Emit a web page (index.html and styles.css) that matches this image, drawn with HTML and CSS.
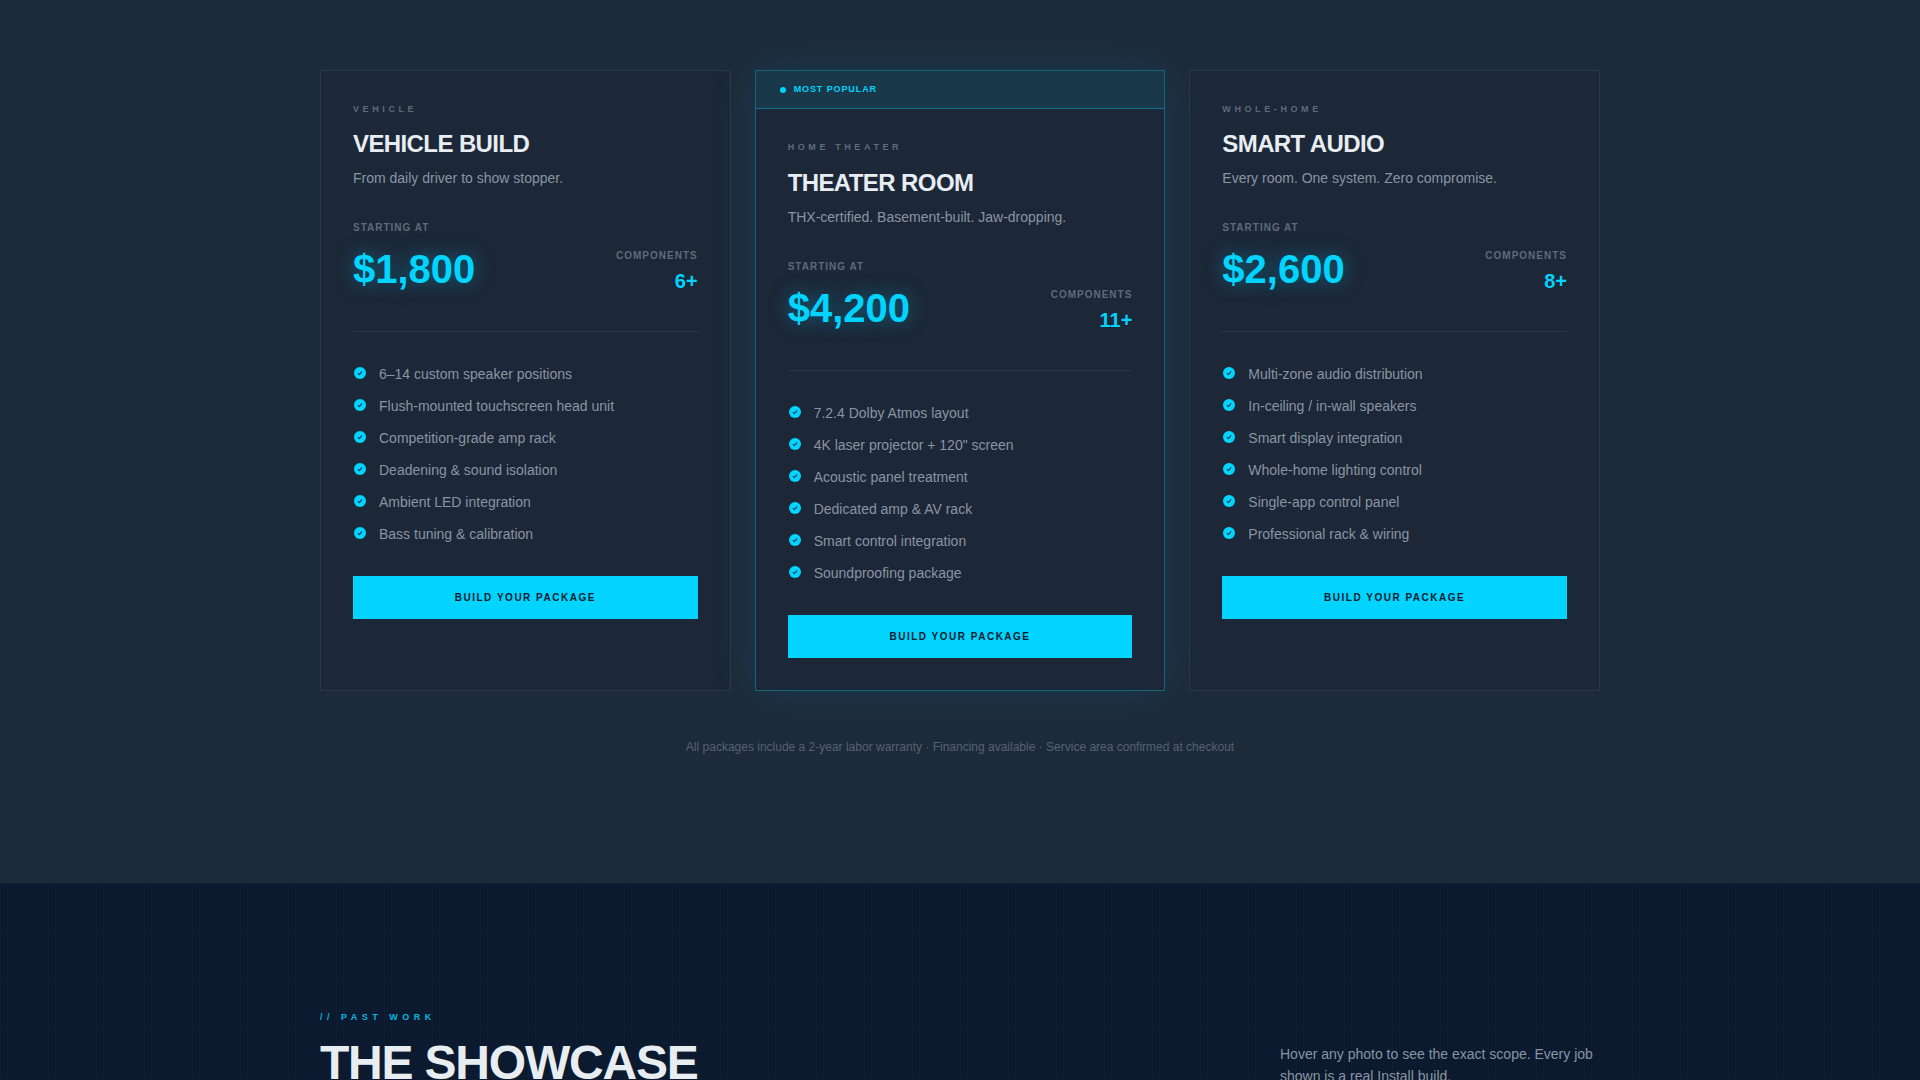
FILE: index.html
```html
<!DOCTYPE html>
<html lang="en">
<head>
  <meta charset="UTF-8" />
  <meta name="viewport" content="width=device-width, initial-scale=1.0" />
  <title>Packages</title>
  <link rel="stylesheet" href="styles.css">
</head>
<body>
  <!-- Hidden check icon, reused by every feature row -->
  <svg class="icon-sprite" aria-hidden="true">
    <symbol id="check" viewBox="0 0 14 14">
      <circle cx="7" cy="7" r="6" fill="#00d4ff"/>
      <path d="M4.8 7.2 6.3 8.6 9.2 5.4" fill="none" stroke="#0f3a55" stroke-width="1.1"/>
    </symbol>
  </svg>

  <!-- Packages -->
  <section class="packages">
    <div class="wrap">
      <div class="package-grid">
        <article class="card">
          <div class="card-body">
            <p class="card-label">VEHICLE</p>
            <h2>VEHICLE BUILD</h2>
            <p class="card-sub">From daily driver to show stopper.</p>
            <div class="price-row">
              <div>
                <p class="meta">STARTING AT</p>
                <p class="price">$1,800</p>
              </div>
              <div class="count">
                <p class="meta">COMPONENTS</p>
                <p class="count-num">6+</p>
              </div>
            </div>
            <ul class="features">
              <li><svg class="check"><use href="#check"/></svg>6–14 custom speaker positions</li>
              <li><svg class="check"><use href="#check"/></svg>Flush-mounted touchscreen head unit</li>
              <li><svg class="check"><use href="#check"/></svg>Competition-grade amp rack</li>
              <li><svg class="check"><use href="#check"/></svg>Deadening &amp; sound isolation</li>
              <li><svg class="check"><use href="#check"/></svg>Ambient LED integration</li>
              <li><svg class="check"><use href="#check"/></svg>Bass tuning &amp; calibration</li>
            </ul>
            <button class="build-btn">BUILD YOUR PACKAGE</button>
          </div>
        </article>

        <article class="card featured">
          <div class="popular"><span class="dot"></span>MOST POPULAR</div>
          <div class="card-body">
            <p class="card-label">HOME THEATER</p>
            <h2>THEATER ROOM</h2>
            <p class="card-sub">THX-certified. Basement-built. Jaw-dropping.</p>
            <div class="price-row">
              <div>
                <p class="meta">STARTING AT</p>
                <p class="price">$4,200</p>
              </div>
              <div class="count">
                <p class="meta">COMPONENTS</p>
                <p class="count-num">11+</p>
              </div>
            </div>
            <ul class="features">
              <li><svg class="check"><use href="#check"/></svg>7.2.4 Dolby Atmos layout</li>
              <li><svg class="check"><use href="#check"/></svg>4K laser projector + 120" screen</li>
              <li><svg class="check"><use href="#check"/></svg>Acoustic panel treatment</li>
              <li><svg class="check"><use href="#check"/></svg>Dedicated amp &amp; AV rack</li>
              <li><svg class="check"><use href="#check"/></svg>Smart control integration</li>
              <li><svg class="check"><use href="#check"/></svg>Soundproofing package</li>
            </ul>
            <button class="build-btn">BUILD YOUR PACKAGE</button>
          </div>
        </article>

        <article class="card">
          <div class="card-body">
            <p class="card-label">WHOLE-HOME</p>
            <h2>SMART AUDIO</h2>
            <p class="card-sub">Every room. One system. Zero compromise.</p>
            <div class="price-row">
              <div>
                <p class="meta">STARTING AT</p>
                <p class="price">$2,600</p>
              </div>
              <div class="count">
                <p class="meta">COMPONENTS</p>
                <p class="count-num">8+</p>
              </div>
            </div>
            <ul class="features">
              <li><svg class="check"><use href="#check"/></svg>Multi-zone audio distribution</li>
              <li><svg class="check"><use href="#check"/></svg>In-ceiling / in-wall speakers</li>
              <li><svg class="check"><use href="#check"/></svg>Smart display integration</li>
              <li><svg class="check"><use href="#check"/></svg>Whole-home lighting control</li>
              <li><svg class="check"><use href="#check"/></svg>Single-app control panel</li>
              <li><svg class="check"><use href="#check"/></svg>Professional rack &amp; wiring</li>
            </ul>
            <button class="build-btn">BUILD YOUR PACKAGE</button>
          </div>
        </article>
      </div>
      <p class="fine-print">All packages include a 2-year labor warranty · Financing available · Service area confirmed at checkout</p>
    </div>
  </section>

  <!-- Showcase -->
  <section class="showcase">
    <div class="wrap showcase-head">
      <div>
        <p class="eyebrow">// PAST WORK</p>
        <h2 class="showcase-title">THE SHOWCASE</h2>
      </div>
      <p class="showcase-note">Hover any photo to see the exact scope. Every job shown is a real Install build.</p>
    </div>
  </section>
</body>
</html>
```

FILE: styles.css
```css
:root {
  --cyan: #00d4ff;
  --section-bg: #1d2a3a;
  --card-bg: #1c2737;
  --dark-bg: #0b1a2e;
  --text: #e8edf2;
  --muted: #8a95a3;
  --dim: #5f6b7a;
  --line: #2a3748;
}

* {
  box-sizing: border-box;
}

html, body {
  height: 100%;
  overflow: hidden;
}

body {
  margin: 0;
  font-family: "Liberation Sans", Arial, sans-serif;
  background: var(--dark-bg);
}

p, h2, ul {
  margin: 0;
  padding: 0;
}

.icon-sprite {
  display: none;
}

.wrap {
  width: 1280px;
  margin: 0 auto;
}

/* Packages */
.packages {
  height: 883px;
  padding-top: 70px;
  background: var(--section-bg);
}

.package-grid {
  display: grid;
  grid-template-columns: repeat(3, 1fr);
  gap: 24px;
}

.card {
  display: flex;
  flex-direction: column;
  background: var(--card-bg);
  border: 1px solid var(--line);
}

.card-body {
  padding: 32px;
}

.featured {
  border-color: rgba(0, 212, 255, 0.35);
  box-shadow: 0 0 48px rgba(0, 212, 255, 0.1);
}

.popular {
  display: flex;
  align-items: center;
  gap: 8px;
  height: 38.4px;
  padding: 0 24px 1px;
  background: rgba(0, 212, 255, 0.1);
  border-bottom: 1px solid rgba(0, 212, 255, 0.35);
  color: var(--cyan);
  font-size: 9px;
  font-weight: 700;
  letter-spacing: 0.9px;
}

.dot {
  width: 6px;
  height: 6px;
  margin-top: 2px;
  border-radius: 50%;
  background: var(--cyan);
}

.card-label {
  font-size: 9px;
  font-weight: 700;
  line-height: 12px;
  letter-spacing: 3.6px;
  color: var(--dim);
}

.card h2 {
  margin-top: 13.3px;
  font-size: 24px;
  line-height: 32px;
  letter-spacing: -0.6px;
  color: var(--text);
}

.card-sub {
  margin-top: 8px;
  font-size: 14px;
  line-height: 20px;
  color: var(--muted);
}

.price-row {
  display: flex;
  justify-content: space-between;
  align-items: flex-end;
  margin-top: 34px;
  padding-bottom: 37px;
  border-bottom: 1px solid var(--line);
}

.meta {
  font-size: 10px;
  font-weight: 700;
  line-height: 12px;
  letter-spacing: 1px;
  color: var(--dim);
}

.price {
  margin: 12px 0 2px;
  font-size: 40px;
  font-weight: 700;
  line-height: 46px;
  color: var(--cyan);
  text-shadow: 0 0 20px rgba(0, 212, 255, 0.4);
}

.count {
  text-align: right;
}

.count-num {
  margin-top: 6px;
  font-size: 20px;
  font-weight: 700;
  line-height: 26px;
  color: var(--cyan);
}

.features {
  display: flex;
  flex-direction: column;
  gap: 12px;
  margin-top: 32px;
  list-style: none;
}

.features li {
  display: flex;
  align-items: flex-start;
  gap: 12px;
  font-size: 14px;
  line-height: 20px;
  color: var(--muted);
}

.check {
  flex: none;
  width: 14px;
  height: 14px;
  margin-top: 2px;
}

.build-btn {
  display: block;
  width: 100%;
  height: 43px;
  margin-top: 32px;
  border: none;
  background: var(--cyan);
  color: #0b1a2e;
  font-family: inherit;
  font-size: 10px;
  font-weight: 700;
  letter-spacing: 1.5px;
}

.fine-print {
  margin-top: 48px;
  text-align: center;
  font-size: 12px;
  line-height: 16px;
  color: #566272;
}

/* Showcase */
.showcase {
  height: 197px;
  padding-top: 128px;
  background-color: var(--dark-bg);
  background-image:
    linear-gradient(rgba(255, 255, 255, 0.02) 1px, transparent 1px),
    linear-gradient(90deg, rgba(255, 255, 255, 0.02) 1px, transparent 1px);
  background-size: 48px 48px;
}

.showcase-head {
  display: flex;
  justify-content: space-between;
  align-items: flex-end;
}

.eyebrow {
  font-size: 9px;
  font-weight: 700;
  line-height: 12px;
  letter-spacing: 4.5px;
  color: var(--cyan);
  opacity: 0.85;
}

.showcase-title {
  margin-top: 14px;
  font-size: 48px;
  line-height: 52px;
  letter-spacing: -1.2px;
  color: var(--text);
}

.showcase-note {
  width: 320px;
  margin-bottom: 2px;
  font-size: 14px;
  line-height: 22px;
  color: var(--muted);
}
```
